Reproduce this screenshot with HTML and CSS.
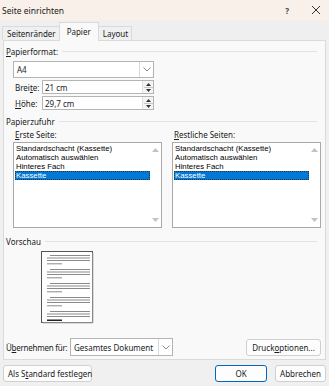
FILE: index.html
```html
<!DOCTYPE html>
<html lang="de">
<head>
<meta charset="utf-8">
<link rel="stylesheet" href="styles.css">
</head>
<body>
<div class="dialog">
  <div class="titlebar">
    <span class="title">Seite einrichten</span>
    <span class="tb-icons"><span class="help">?</span>
      <svg class="close" width="10" height="10" viewBox="0 0 10 10"><path d="M1 1L9 9M9 1L1 9" stroke="#333" stroke-width="1"/></svg>
    </span>
  </div>
  <div class="tabs">
    <div class="tab">Seitenränder</div>
    <div class="tab active">Papier</div>
    <div class="tab">Layout</div>
  </div>
  <div class="panel">
    <div class="group-head"><span><u>P</u>apierformat:</span><i></i></div>
    <div class="select wide"><span class="val">A4</span><span class="drop"><svg width="8" height="5" viewBox="0 0 8 5"><path d="M0.5 0.5L4 4L7.5 0.5" fill="none" stroke="#8a8a8a"/></svg></span></div>
    <div class="field"><label>Brei<u>t</u>e:</label><div class="spin"><span class="val">21 cm</span><span class="arrows"><svg width="9" height="13" viewBox="0 0 9 13"><path d="M2 5L4.5 2L7 5Z" fill="#333"/><path d="M0 6.5H9" stroke="#c8c8c8"/><path d="M2 8L4.5 11L7 8Z" fill="#333"/></svg></span></div></div>
    <div class="field"><label><u>H</u>öhe:</label><div class="spin"><span class="val">29,7 cm</span><span class="arrows"><svg width="9" height="13" viewBox="0 0 9 13"><path d="M2 5L4.5 2L7 5Z" fill="#333"/><path d="M0 6.5H9" stroke="#c8c8c8"/><path d="M2 8L4.5 11L7 8Z" fill="#333"/></svg></span></div></div>
    <div class="group-head gh2"><span>Papierzufuhr</span><i></i></div>
    <div class="lists">
      <div class="col">
        <div class="list-label"><u>E</u>rste Seite:</div>
        <div class="listbox">
          <div class="items">
            <div class="item">Standardschacht (Kassette)</div>
            <div class="item">Automatisch auswählen</div>
            <div class="item">Hinteres Fach</div>
            <div class="item sel">Kassette</div>
          </div>
          <div class="sb"><svg width="7" height="4" viewBox="0 0 7 4"><path d="M0 4L3.5 0L7 4Z" fill="#c2c2c2"/></svg><svg width="7" height="4" viewBox="0 0 7 4"><path d="M0 0L3.5 4L7 0Z" fill="#c2c2c2"/></svg></div>
        </div>
      </div>
      <div class="col">
        <div class="list-label"><u>R</u>estliche Seiten:</div>
        <div class="listbox">
          <div class="items">
            <div class="item">Standardschacht (Kassette)</div>
            <div class="item">Automatisch auswählen</div>
            <div class="item">Hinteres Fach</div>
            <div class="item sel">Kassette</div>
          </div>
          <div class="sb"><svg width="7" height="4" viewBox="0 0 7 4"><path d="M0 4L3.5 0L7 4Z" fill="#c2c2c2"/></svg><svg width="7" height="4" viewBox="0 0 7 4"><path d="M0 0L3.5 4L7 0Z" fill="#c2c2c2"/></svg></div>
        </div>
      </div>
    </div>
    <div class="group-head gh3"><span>Vorschau</span><i></i></div>
    <div class="preview">
      <svg class="page" width="53" height="73" viewBox="0 0 53 73">
        <rect x="0.5" y="0.5" width="51" height="71" fill="#fff" stroke="#555"/>
        <path d="M52 2V72H2" fill="none" stroke="#bbb"/>
        <g fill="#8a8a8a">
          <rect x="9" y="4" width="40" height="1"/><rect x="6" y="6.5" width="43" height="1"/><rect x="6" y="9" width="43" height="1"/><rect x="6" y="12.3" width="15" height="1"/>
          <rect x="9" y="18" width="40" height="1"/><rect x="6" y="20.5" width="43" height="1"/><rect x="6" y="23" width="43" height="1"/><rect x="6" y="26.3" width="15" height="1"/>
          <rect x="9" y="32" width="40" height="1"/><rect x="6" y="34.5" width="43" height="1"/><rect x="6" y="37" width="43" height="1"/><rect x="6" y="40.3" width="15" height="1"/>
          <rect x="9" y="46" width="40" height="1"/><rect x="6" y="48.5" width="43" height="1"/><rect x="6" y="51" width="43" height="1"/><rect x="6" y="54.3" width="15" height="1"/>
          <rect x="9" y="60" width="40" height="1"/><rect x="6" y="62.5" width="43" height="1"/><rect x="6" y="65" width="43" height="1"/>
        </g>
        <rect x="6" y="68.5" width="15" height="1.5" fill="#222"/>
      </svg>
    </div>
    <div class="apply-row">
      <label>Ü<u>b</u>ernehmen für:</label>
      <div class="select apply"><span class="val">Gesamtes Dokument</span><span class="drop"><svg width="8" height="5" viewBox="0 0 8 5"><path d="M0.5 0.5L4 4L7.5 0.5" fill="none" stroke="#8a8a8a"/></svg></span></div>
      <span class="spacer"></span>
      <button class="btn">Druck<u>o</u>ptionen...</button>
    </div>
  </div>
  <div class="footer">
    <button class="btn">Als S<u>t</u>andard festlegen</button>
    <span class="spacer"></span>
    <button class="btn ok">OK</button>
    <button class="btn cancel">Abbrechen</button>
  </div>
</div>
</body>
</html>
```

FILE: styles.css
```css
* { box-sizing: border-box; }
html, body { margin: 0; padding: 0; }
body {
  width: 329px;
  height: 386px;
  background: #f0f0f0;
  font-family: "Noto Sans", "Open Sans", sans-serif;
  font-size: 8px;
  color: #1a1a1a;
  overflow: hidden;
  white-space: nowrap;
}
u { text-decoration: underline; text-underline-offset: 1px; }
.dialog { display: flex; flex-direction: column; height: 386px; }
.titlebar {
  height: 20px;
  background: #f9f0ea;
  display: flex;
  align-items: center;
  justify-content: space-between;
  padding: 0 8px 0 2px;
  font-size: 8.5px;
}
.tb-icons { display: flex; align-items: center; gap: 22px; }
.help { font-size: 8px; font-weight: bold; color: #444; }
.close { display: block; }
.tabs {
  height: 20px;
  display: flex;
  align-items: flex-end;
  padding-left: 2px;
  background: #efefef;
}
.tab {
  height: 14px;
  padding: 0 3px 0 4px;
  border: 1px solid #dadada;
  border-bottom: none;
  background: #f0f0f0;
  display: flex;
  align-items: center;
  margin-right: -1px;
}
.tab.active {
  background: #f9f9f9;
  padding: 0 7px 1px;
  position: relative;
  z-index: 1;
  margin-bottom: -1px;
  height: 19px;
}
.panel {
  margin: 0 3px;
  height: 320px;
  background: #f9f9f9;
  border: 1px solid #dadada;
  display: flex;
  flex-direction: column;
  padding: 4px 4px 0 2px;
}
.group-head {
  display: flex;
  align-items: center;
  gap: 4px;
  height: 12px;
}
.group-head i {
  flex: 1;
  border-top: 1px solid #e3e3e3;
  margin-right: 4px;
}
.select {
  display: flex;
  background: #fff;
  border: 1px solid #b4b4b4;
  height: 17px;
}
.select .val { flex: 1; display: flex; align-items: center; padding-left: 3px; }
.select .drop {
  width: 14px;
  border-left: 1px solid #d8d8d8;
  display: flex;
  align-items: center;
  justify-content: center;
}
.select.wide { width: 141px; margin: 4px 0 0 7px; }
.field {
  display: flex;
  align-items: center;
  margin: 2px 0 0 9px;
}
.field label { width: 27px; }
.spin {
  display: flex;
  width: 112px;
  height: 14px;
  background: #fff;
  border: 1px solid #b4b4b4;
}
.spin .val { flex: 1; display: flex; align-items: center; padding-left: 2px; }
.spin .arrows {
  width: 11px;
  display: flex;
  align-items: center;
  justify-content: center;
  background: #f4f4f4;
  border-left: 1px solid #e0e0e0;
}
.gh2 { margin-top: 5px; }
.lists {
  display: grid;
  grid-template-columns: 1fr 1fr;
  column-gap: 10px;
  padding: 0 0 0 7px;
  margin-top: 2px;
}
.list-label { height: 11px; padding-left: 2px; display: flex; align-items: center; }
.listbox {
  margin-top: 2px;
  height: 86px;
  background: #fff;
  border: 1px solid #a9a9a9;
  display: flex;
  padding: 1px 0 1px 1px;
}
.items { flex: 1; font-family: "Liberation Sans", Arial, sans-serif; font-size: 7.8px; color: #000; }
.item { height: 9px; line-height: 9px; padding-left: 1px; }
.item.sel { background: #0078d7; color: #fff; outline: 1px dotted #333; outline-offset: -1px; }
.sb {
  width: 11px;
  display: flex;
  flex-direction: column;
  justify-content: space-between;
  align-items: center;
  padding: 4px 0 4px;
}
.sb svg { display: block; }
.gh3 { margin-top: 7px; }
.preview { padding: 4px 0 0 35px; height: 87px; }
.page { display: block; }
.apply-row {
  display: flex;
  align-items: center;
  margin-top: 4px;
  padding-left: 0;
}
.apply-row label { width: 64px; letter-spacing: -0.25px; }
.select.apply { width: 103px; height: 18px; }
.spacer { flex: 1; }
.btn {
  font-family: inherit;
  font-size: 8px;
  color: #1a1a1a;
  background: #fdfdfd;
  border: 1px solid #d0d0d0;
  border-radius: 3px;
  height: 17px;
  padding: 0 4px;
  margin: 0;
  white-space: nowrap;
}
.apply-row .btn { width: 75px; }
.footer {
  display: flex;
  align-items: center;
  padding: 5px 3px 0 3px;
  gap: 8px;
}
.footer .btn:first-child { width: 89px; }
.btn.ok { width: 52px; border: 1.5px solid #0067c0; }
.btn.cancel { width: 51px; }
```
